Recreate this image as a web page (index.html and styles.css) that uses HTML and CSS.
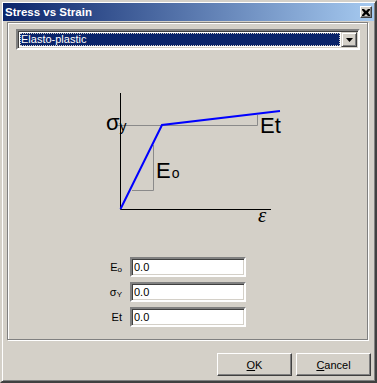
FILE: index.html
```html
<!DOCTYPE html>
<html lang="en">
<head>
    <meta charset="UTF-8">
    <title>Stress vs Strain</title>
    <link rel="stylesheet" href="styles.css">
</head>
<body>
    <div class="window">
        <!-- title bar -->
        <div class="titlebar">
            <span class="title">Stress vs Strain</span>
            <span class="close-btn">
                <svg width="8" height="7" viewBox="0 0 8 7"><path d="M0 0h2l2 2 2-2h2v1l-2 2.5 2 2.5v1h-2l-2-2-2 2h-2v-1l2-2.5-2-2.5z" fill="#000"/></svg>
            </span>
        </div>

        <div class="content">
            <div class="group">
                <!-- material model -->
                <div class="combo">
                    <div class="combo-value"><span class="focus">Elasto-plastic</span></div>
                    <div class="combo-btn">
                        <svg width="7" height="4" viewBox="0 0 7 4"><path d="M0 0h7l-3.5 4z" fill="#000"/></svg>
                    </div>
                </div>

                <!-- curve -->
                <svg class="chart" width="190" height="140" viewBox="0 0 190 140">
                    <g stroke="#8a8a8a" stroke-width="1" fill="none">
                        <path d="M16 37.5H157.5V27"/>
                        <path d="M53.5 57V102.5H32"/>
                    </g>
                    <path d="M20.5 5V121.5H171" stroke="#000" stroke-width="1" fill="none"/>
                    <path d="M20.5 121L62 37L180 23" stroke="#0000ff" stroke-width="2" fill="none"/>
                    <text class="sym" x="6" y="42">σ<tspan class="sym-sub" dy="1">y</tspan></text>
                    <text class="sym" x="56" y="90">E<tspan class="sym-sub" dx="1">o</tspan></text>
                    <text class="sym" x="160" y="45">E<tspan dx="0">t</tspan></text>
                    <text class="eps" x="158" y="134">ε</text>
                </svg>

                <!-- parameters -->
                <div class="fields">
                    <div class="field">
                        <span class="field-label">E<span class="sub">o</span></span>
                        <input class="field-input" type="text" value="0.0">
                    </div>
                    <div class="field">
                        <span class="field-label">σ<span class="sub">Y</span></span>
                        <input class="field-input" type="text" value="0.0">
                    </div>
                    <div class="field">
                        <span class="field-label">Et</span>
                        <input class="field-input" type="text" value="0.0">
                    </div>
                </div>
            </div>

            <div class="buttons">
                <button class="btn"><u>O</u>K</button>
                <button class="btn"><u>C</u>ancel</button>
            </div>
        </div>
    </div>
</body>
</html>
```

FILE: styles.css
```css
* {
    font-family: "Liberation Sans", Arial, sans-serif;
    box-sizing: border-box;
}

body {
    margin: 0;
    padding: 0;
    background: #d4d0c8;
}

.window {
    width: 377px;
    height: 383px;
    background: #d4d0c8;
    border: 2px solid;
    border-color: #d4d0c8 #404040 #404040 #d4d0c8;
    box-shadow: inset 1px 1px 0 #fff, inset -1px -1px 0 #808080;
    padding: 1px;
    display: flex;
    flex-direction: column;
}

.titlebar {
    height: 18px;
    background: linear-gradient(to right, #0a246a, #a6caf0);
    display: flex;
    align-items: center;
    justify-content: space-between;
    padding: 0 2px 0 2px;
}

.title {
    color: #fff;
    font-weight: bold;
    font-size: 11.5px;
}

.close-btn {
    width: 12px;
    height: 12px;
    background: #d4d0c8;
    border: 1px solid;
    border-color: #fff #404040 #404040 #fff;
    box-shadow: inset -1px -1px 0 #808080;
    display: flex;
    align-items: center;
    justify-content: center;
}

.content {
    flex: 1;
    display: flex;
    flex-direction: column;
    padding: 1px 3px 0 4px;
}

.group {
    width: 361px;
    height: 318px;
    border: 1px solid #808080;
    box-shadow: inset 1px 1px 0 #fff, 1px 1px 0 #fff;
    padding: 6px 0 0 8px;
}

.combo {
    width: 344px;
    height: 21px;
    background: #fff;
    border: 2px solid;
    border-color: #808080 #fff #fff #808080;
    box-shadow: inset 1px 1px 0 #404040, inset -1px -1px 0 #d4d0c8;
    display: flex;
    padding: 1px;
}

.combo-value {
    flex: 1;
    padding: 1px;
}

.focus {
    display: block;
    height: 100%;
    background: #0a246a;
    color: #fff;
    font-size: 11px;
    line-height: 13px;
    padding-left: 1px;
    outline: 1px dotted #d4d0c8;
    outline-offset: -1px;
}

.combo-btn {
    width: 16px;
    background: #d4d0c8;
    border: 1px solid;
    border-color: #d4d0c8 #404040 #404040 #d4d0c8;
    box-shadow: inset 1px 1px 0 #fff, inset -1px -1px 0 #808080;
    display: flex;
    align-items: center;
    justify-content: center;
}

.chart {
    display: block;
    margin: 38px 0 0 84px;
}

.sym {
    font-family: "Liberation Sans", sans-serif;
    font-size: 22px;
    fill: #000;
}

.sym-sub {
    font-size: 14px;
}

.eps {
    font-family: "Liberation Serif", serif;
    font-style: italic;
    font-size: 21px;
    fill: #000;
}

.fields {
    margin: 29px 0 0 84px;
    display: flex;
    flex-direction: column;
    gap: 5px;
}

.field {
    display: flex;
    align-items: center;
    gap: 8px;
}

.field-label {
    width: 22px;
    text-align: right;
    font-size: 11px;
    color: #000;
}

.sub {
    font-size: 8px;
    vertical-align: -1px;
}

.field-input {
    width: 116px;
    height: 20px;
    margin: 0;
    border: 2px solid;
    border-color: #808080 #fff #fff #808080;
    box-shadow: inset 1px 1px 0 #404040, inset -1px -1px 0 #d4d0c8;
    padding: 0 2px;
    font-size: 11px;
    background: #fff;
    outline: none;
}

.buttons {
    display: flex;
    justify-content: flex-end;
    gap: 4px;
    margin-top: 13px;
}

.btn {
    width: 75px;
    height: 23px;
    margin: 0;
    padding: 0;
    background: #d4d0c8;
    border: 1px solid;
    border-color: #fff #404040 #404040 #fff;
    box-shadow: inset -1px -1px 0 #808080;
    font-size: 11px;
    color: #000;
}
```
